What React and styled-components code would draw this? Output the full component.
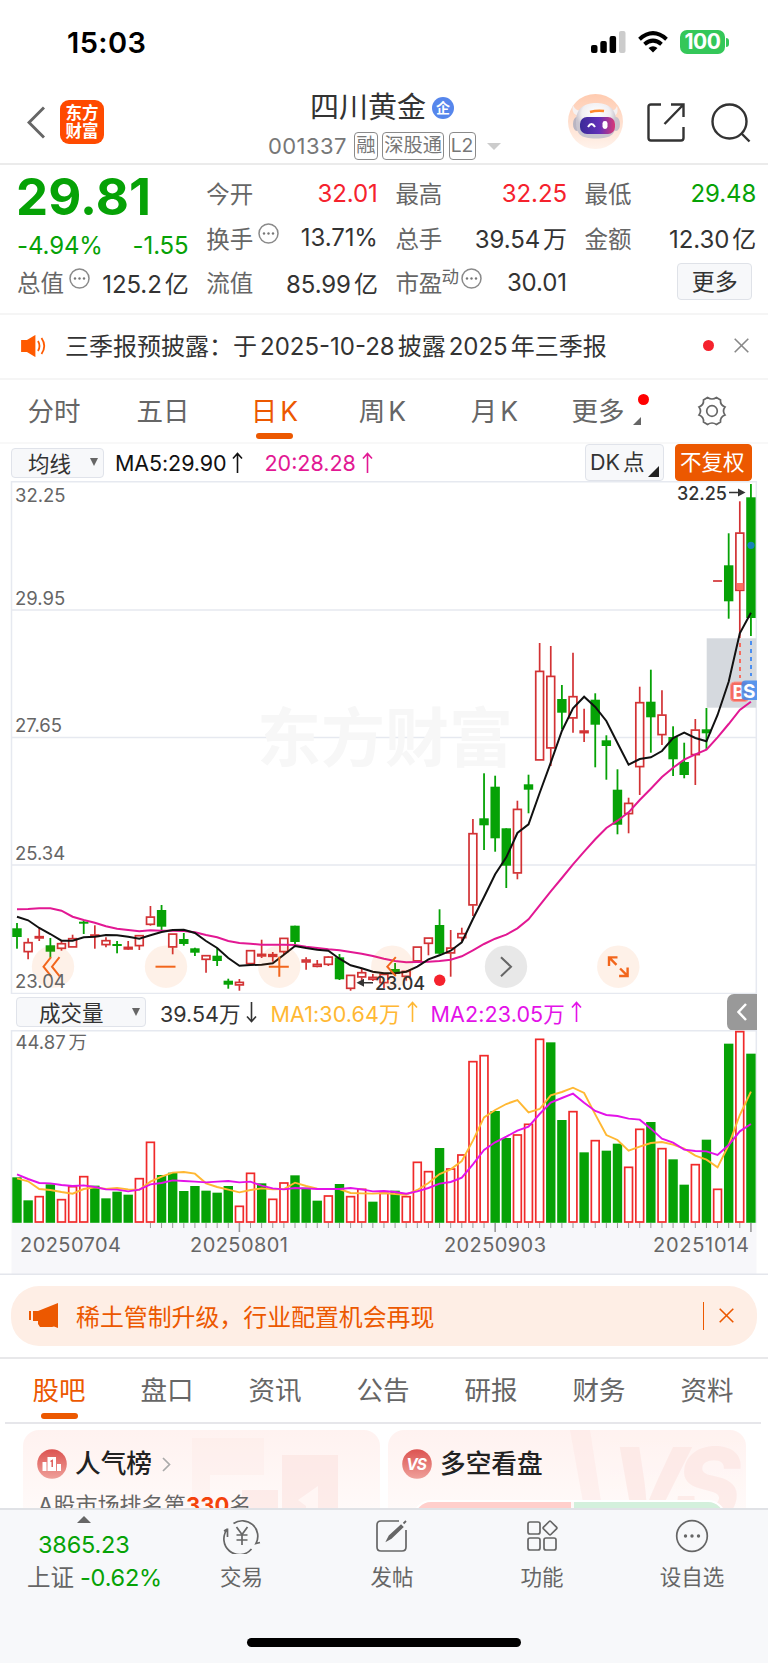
import React from 'react';
import styled, { createGlobalStyle } from 'styled-components';

const GlobalStyle = createGlobalStyle`
  * { box-sizing: border-box; }
  body {
    margin: 0;
    background: #fff;
    color: #333;
    font-family: Inter, "Noto Sans CJK SC", sans-serif;
    -webkit-font-smoothing: antialiased;
  }
  svg { display: block; flex: none; }
`;

const orange = '#ec5800';
const green = '#06a206';
const red = '#f5222d';

const Page = styled.div`
  width: 768px;
  height: 1663px;
  overflow: hidden;
  display: flex;
  flex-direction: column;
  white-space: nowrap;
`;

const StatusBar = styled.div`
  height: 84px;
  flex: none;
  display: flex;
  justify-content: space-between;
  align-items: center;
  padding: 0 39px 0 67px;
`;

const Clock = styled.div`
  font-size: 29px;
  font-weight: 600;
  letter-spacing: 0.4px;
  color: #000;
`;

const StatusIcons = styled.div`
  display: flex;
  align-items: center;
  gap: 12px;
`;

const Battery = styled.div`
  display: flex;
  align-items: center;
  gap: 1px;
  &::after {
    content: '';
    width: 3px;
    height: 9px;
    border-radius: 0 3px 3px 0;
    background: #34c759;
  }
`;

const BatteryLevel = styled.div`
  width: 45px;
  height: 24px;
  border-radius: 7px;
  background: #34c759;
  color: #fff;
  font-size: 21px;
  font-weight: 700;
  letter-spacing: -0.4px;
  line-height: 24px;
  text-align: center;
`;

const Header = styled.div`
  height: 81px;
  flex: none;
  display: grid;
  grid-template-columns: 241px 281px 1fr;
  padding: 0 17px 0 27px;
  border-bottom: 2px solid #ebebeb;
`;

const HeaderLeft = styled.div`
  display: flex;
  align-items: flex-start;
  gap: 15px;
  padding-top: 16px;
`;

const Logo = styled.div`
  width: 44px;
  height: 44px;
  border-radius: 9px;
  background: #ff4a00;
  color: #fff;
  font-size: 16.5px;
  font-weight: 700;
  line-height: 18px;
  padding-top: 4px;
  text-align: center;
`;

const HeaderTitle = styled.div`
  display: flex;
  flex-direction: column;
`;

const StockName = styled.div`
  display: flex;
  align-items: center;
  gap: 6px;
  padding: 6px 0 0 42px;
  height: 41px;
  font-size: 29px;
  line-height: 36px;
`;

const NameBadge = styled.span`
  width: 22px;
  height: 22px;
  border-radius: 50%;
  background: #5686ec;
  color: #fff;
  font-size: 14px;
  font-weight: 700;
  line-height: 21px;
  text-align: center;
`;

const StockCode = styled.div`
  display: flex;
  align-items: center;
  gap: 4.3px;
  height: 42px;
  color: #777;
  font-size: 22px;
  letter-spacing: 0.4px;
`;

const CodeNumber = styled.span`
  margin-right: 3px;
`;

const CodeTag = styled.span`
  height: 28px;
  padding: 0 1.2px;
  border: 1.5px solid #8a8a8a;
  border-radius: 4px;
  font-size: 19.3px;
  line-height: 25px;
  letter-spacing: 0;
`;

const HeaderActions = styled.div`
  display: flex;
  align-items: flex-start;
  justify-content: flex-end;
`;

const Stats = styled.div`
  height: 150px;
  flex: none;
  display: grid;
  grid-template-columns: repeat(4, 171.6px);
  column-gap: 17.6px;
  padding: 6px 0 0 17px;
  border-bottom: 2px solid #f5f5f5;
`;

const StatColumn = styled.div`
  display: flex;
  flex-direction: column;
`;

const Stat = styled.div`
  height: 44.5px;
  display: flex;
  align-items: center;
  justify-content: space-between;
  font-size: 24px;
  letter-spacing: -0.1px;
  color: ${(p) => p.$color || '#333'};
`;

const Unit = styled.span`
  margin-left: 3px;
`;

const StatLabel = styled.span`
  display: flex;
  align-items: center;
  gap: 5px;
  color: #666;
  font-size: 23.5px;
  letter-spacing: 0;
  svg { margin-bottom: 8px; }
`;

const Sup = styled.span`
  font-size: 17.5px;
  margin: 0 -3px 14px -6px;
`;

const LastPrice = styled.div`
  height: 52px;
  margin-left: -1px;
  font-size: 51px;
  font-weight: 700;
  line-height: 52px;
  letter-spacing: 0.1px;
  color: ${green};
`;

const PriceChange = styled(Stat)`
  height: 37px;
  padding-top: 19px;
  padding-bottom: 12px;
`;

const MoreButton = styled.div`
  width: 75px;
  height: 37px;
  margin: 3px 4px 0 auto;
  border: 1.5px solid #dfe2e8;
  border-radius: 4px;
  background: #f7f8fa;
  font-size: 23px;
  line-height: 36px;
  text-align: center;
`;

const Notice = styled.div`
  height: 65px;
  flex: none;
  display: flex;
  align-items: center;
  padding: 0 19px 2px 21px;
  border-bottom: 2px solid #f5f5f5;
  font-size: 24px;
`;

const NoticeText = styled.span`
  flex: 1;
  margin-left: ${(p) => p.$gap};
  margin-top: ${(p) => p.$lift || '0'};
`;

const Digits = styled.span`
  margin: 0 3px;
`;

const Dot = styled.i`
  width: 11px;
  height: 11px;
  border-radius: 50%;
  background: ${red};
  margin-right: 20px;
`;

const PeriodTabs = styled.div`
  height: 64px;
  flex: none;
  display: grid;
  grid-template-columns: 108px 110px 113px 103px 121px 86px 1fr;
  border-bottom: 2px solid #f8f8f8;
`;

const Tab = styled.div`
  position: relative;
  display: flex;
  justify-content: center;
  padding-top: 12px;
  font-size: 26.5px;
  line-height: 38px;
  color: ${(p) => (p.$active ? orange : '#666')};
  &::after {
    content: '';
    position: absolute;
    bottom: 3px;
    width: 37px;
    height: 6px;
    border-radius: 3px;
    background: ${(p) => (p.$active ? orange : 'transparent')};
  }
`;

const K = styled.span`
  margin-left: 3px;
`;

const TabDot = styled.i`
  position: absolute;
  top: 14px;
  right: -8px;
  width: 11px;
  height: 11px;
  border-radius: 50%;
  background: #f00;
`;

const TabCorner = styled.i`
  position: absolute;
  top: 37px;
  right: 0;
  border-left: 8px solid transparent;
  border-bottom: 8px solid #666;
`;

const Bar = styled.div`
  height: ${(p) => p.$height};
  flex: none;
  display: flex;
  align-items: center;
  padding: 0 ${(p) => p.$right} 0 ${(p) => p.$left};
  font-size: 21.5px;
`;

const Picker = styled.div`
  width: ${(p) => p.$width};
  height: 30px;
  display: flex;
  align-items: center;
  justify-content: space-between;
  padding: 0 5px 1px ${(p) => p.$indent};
  border: 1.5px solid #e0e3ea;
  border-radius: 4px;
  background: #f7f8fa;
  font-size: 21.5px;
  &::after {
    content: '';
    border: 4px solid transparent;
    border-top: 8px solid #666;
    border-bottom: 0;
  }
`;

const Legend = styled.span`
  display: flex;
  align-items: center;
  gap: 5px;
  margin-left: ${(p) => p.$gap};
  letter-spacing: ${(p) => p.$spacing || '0'};
  color: ${(p) => p.$color};
`;

const ModeButton = styled.div`
  width: ${(p) => p.$width};
  position: relative;
  height: 37px;
  padding-left: 4px;
  margin-left: ${(p) => p.$gap};
  border: 1.5px solid ${(p) => (p.$filled ? orange : '#e0e3ea')};
  border-radius: 4px;
  background: ${(p) => (p.$filled ? orange : '#f7f8fa')};
  color: ${(p) => (p.$filled ? '#fff' : '#333')};
  line-height: 35px;
  word-spacing: -3px;
  &::after {
    content: '';
    display: ${(p) => (p.$filled ? 'none' : 'block')};
    position: absolute;
    right: 4px;
    bottom: 3px;
    border-left: 11px solid transparent;
    border-bottom: 11px solid #222;
  }
`;

const PanelToggle = styled.div`
  display: flex;
  align-items: center;
  justify-content: center;
  width: 30px;
  height: 37px;
  margin-left: auto;
  border-radius: 7px 0 0 7px;
  background: #999;
`;

const Banner = styled.div`
  height: 60px;
  flex: none;
  display: flex;
  align-items: center;
  margin: 11px 11px;
  padding: 0 23px 1px 18px;
  border-radius: 28px;
  background: #feeee5;
  color: ${orange};
  font-size: 23.9px;
`;

const Divider = styled.i`
  width: 1.5px;
  height: 28px;
  margin-right: 15px;
  background: ${orange};
`;

const SectionTabs = styled.div`
  height: 65px;
  flex: none;
  display: grid;
  grid-template-columns: repeat(7, 108px);
  margin: 0 7px 0 5px;
  border-bottom: 2px solid #e6e6ea;
`;

const SectionEdge = styled.div`
  height: 2px;
  flex: none;
  background: #e8e8ea;
`;

const Cards = styled.div`
  height: 84px;
  flex: none;
  overflow: hidden;
  display: grid;
  grid-template-columns: 357px 358px;
  gap: 8px;
  padding: 6px 0 0 23px;
`;

const Card = styled.div`
  position: relative;
  overflow: hidden;
  height: 150px;
  border-radius: 16px;
  background: linear-gradient(#fff2f0, #fffaf9 80px);
`;

const CardArt = styled.svg`
  position: absolute;
  top: 0;
  right: 0;
`;

const CardTitle = styled.div`
  position: relative;
  display: flex;
  align-items: center;
  gap: 8px;
  height: 68px;
  padding-left: 14px;
  line-height: 32px;
  color: #222;
  font-size: 25.7px;
  font-weight: 500;
`;

const TitleText = styled.span`
  margin-bottom: 1px;
`;

const CardText = styled.div`
  position: relative;
  margin-top: -7px;
  padding-left: 15px;
  font-size: 22px;
  line-height: 28px;
  letter-spacing: 0.1px;
  color: #666;
  b { color: #f4420a; }
`;

const Vote = styled.div`
  position: relative;
  display: flex;
  gap: 3px;
  width: 313px;
  height: 40px;
  margin: 2px 0 0 25px;
  border: 2px solid #fff;
  border-radius: 18px;
  overflow: hidden;
`;

const VoteSide = styled.div`
  flex: ${(p) => p.$share};
  background: ${(p) => p.$color};
`;

const Dock = styled.div`
  height: 155px;
  flex: none;
  display: flex;
  flex-direction: column;
  align-items: center;
  border-top: 2px solid #e0e2e6;
  background: #f7f8fa;
`;

const DockItems = styled.div`
  width: 768px;
  height: 128px;
  display: grid;
  grid-template-columns: 166px 151px 150px 150px 150px;
`;

const DockItem = styled.div`
  display: flex;
  flex-direction: column;
  align-items: center;
  gap: 5px;
  padding-top: 8px;
  color: #666;
  font-size: 21.5px;
  line-height: 36px;
`;

const IndexQuote = styled.div`
  padding: 6px 0 0 27px;
  color: ${green};
  font-size: 23.5px;
  line-height: 33px;
  letter-spacing: -0.2px;
  svg { margin-left: 50px; }
`;

const IndexValue = styled.div`
  padding-left: 11px;
  margin-top: 5px;
`;

const IndexName = styled.span`
  color: #666;
  letter-spacing: 0;
  margin-right: 6px;
`;

const HomeBar = styled.div`
  width: 274px;
  height: 9px;
  border-radius: 5px;
  background: #000;
`;

// [colour, body top, body bottom, high, low], one row for each trading day
const candles = [
  ['g', 928.3, 937, 923, 948.7], ['r', 942.3, 952, 938.3, 959.3], ['r', 936.3, 938.3, 928, 941],
  ['g', 945.3, 951.7, 938, 957.7], ['r', 943.3, 948.7, 941, 950.7], ['r', 938.3, 947.3, 934.7, 947.3],
  ['g', 921.7, 923.3, 920, 934], ['r', 934.7, 936.7, 925.3, 948.7], ['r', 940.3, 945, 937.3, 947.3],
  ['g', 944, 946, 941, 953.3], ['r', 947, 949.3, 941, 950], ['r', 935.3, 946, 935.3, 950],
  ['r', 916.7, 924.7, 906, 925.7], ['g', 910, 926.7, 905, 930], ['r', 933.7, 947.3, 933.7, 954.3],
  ['g', 939, 944, 933, 945.7], ['g', 948.3, 952.7, 947.7, 956], ['r', 955.3, 959.7, 955.3, 972.7],
  ['g', 955.7, 961, 948, 966], ['g', 980.7, 984.7, 978.7, 988.7], ['r', 982, 985.3, 979, 990.7],
  ['r', 950.3, 964, 950, 964], ['r', 954, 956.3, 939.7, 958], ['r', 954.3, 956.7, 952, 961.7],
  ['r', 938, 952, 938, 954], ['g', 925.7, 942, 925.7, 945.7], ['r', 959.7, 962.3, 957.3, 969.7],
  ['r', 964, 966.7, 960, 967.3], ['r', 956.7, 964.7, 956, 966], ['g', 957.3, 979.3, 954, 980],
  ['r', 975, 988.7, 975, 990.7], ['r', 972.3, 977.3, 968.7, 980.7], ['r', 977, 979.7, 974, 981],
  ['r', 974, 983, 973, 988], ['g', 969, 974, 963, 975.7], ['r', 971, 976.7, 971, 980.7],
  ['r', 946.7, 961.3, 946.7, 961.3], ['r', 937.7, 943.7, 937.7, 955.3], ['g', 925, 953.7, 909.3, 954.7],
  ['r', 947.7, 953.3, 930, 976.7], ['r', 933.3, 938, 927.7, 941], ['r', 833.3, 905.3, 819, 916],
  ['g', 818.3, 825.3, 773.3, 850], ['g', 786.7, 838.3, 775.7, 851.7], ['g', 828.3, 865.7, 828.3, 888],
  ['r', 809, 873.3, 800.7, 879.3], ['g', 784.3, 789.7, 774.7, 813.3], ['r', 671, 760.3, 643, 760.3],
  ['r', 676, 748.3, 646, 766], ['g', 699, 712.7, 685, 729.3], ['r', 696.3, 718.3, 652.7, 732.7],
  ['r', 730.7, 733, 708.7, 742], ['g', 699.7, 724.7, 693.3, 767.3], ['g', 740.3, 746, 735.3, 779.7],
  ['g', 789.7, 824.7, 769.3, 834.3], ['r', 803, 814, 797.7, 833.3], ['r', 702.3, 767, 686.7, 795],
  ['g', 701.7, 717.3, 669.7, 752.7], ['r', 714.7, 735, 690.3, 745], ['g', 737, 759.3, 726.3, 776],
  ['g', 762, 775, 742.7, 778.3], ['r', 729.7, 755, 719, 785], ['g', 729.3, 733.3, 708, 749.3],
  ['r', 581, 582, 581, 582], ['g', 565.3, 601.3, 533.3, 618.7], ['r', 532.7, 590.7, 501.3, 638],
  ['g', 497.3, 618, 484, 636],
];

const ma5 = [
  916.7, 920.3, 928, 934, 940.7, 940.7, 937.3, 936.7, 935, 935.3, 936.7, 938.7, 935.3, 932, 930, 929.7, 933,
  941, 948, 958, 965.7, 965, 964.7, 963.3, 954.7, 946, 948, 949.7, 950.7, 958.7, 965.3, 968.3, 971.7, 973.3,
  973.3, 971.7, 966.7, 959.3, 955.3, 950.7, 942.3, 919, 897, 874.3, 857.3, 833, 824.3, 793, 762.7, 731, 708.3,
  696.7, 707, 721, 743, 764.7, 759, 757.3, 751, 738, 732.7, 738, 741.3, 715, 681.7, 633.3, 612.7,
];

const ma20 = [
  909.3, 909, 908.3, 908.3, 910.7, 916.7, 920, 922.7, 926.3, 928.7, 930, 931.3, 930.3, 930.7, 930.7, 931, 932.3,
  935, 937.3, 941, 943, 943.7, 944.7, 944.7, 944.7, 945, 946.7, 948, 949.3, 950.3, 952, 953.7, 956, 958.7, 961,
  962.3, 962, 961.7, 961, 959.7, 956.3, 950.3, 944, 938.7, 934.7, 928.3, 919.3, 905.3, 891.3, 878, 864.3, 851.7,
  839.3, 828, 820.7, 812.3, 800, 788.7, 777, 767.7, 759.7, 754.3, 749.7, 737.3, 724, 710, 701.7,
];

// volumes and their averages are in thirds of a pixel below the panel's top
const volumes = [
  472, 541, 530, 493, 539, 500, 470, 497, 535, 515, 524, 476, 367, 465, 458, 513, 498, 512, 518, 498, 559, 460,
  490, 538, 489, 466, 503, 542, 528, 492, 530, 508, 545, 520, 512, 530, 427, 455, 384, 447, 405, 125, 107, 273,
  354, 345, 313, 58, 67, 300, 275, 397, 362, 392, 371, 442, 328, 306, 386, 418, 494, 434, 359, 508, 71, 35, 101,
];

const volumeColors = 'ggrgrrrgggg' + 'rrggggggg' + 'rrgrrggg' + 'rgrrgrgr' + 'rrgrrrrg' + 'grrrggrgrggrrgrggrgrgrg';

const volMa1 = [
  475, 484, 507, 510, 516, 521, 507, 502, 507, 504, 508, 509, 485, 470, 458, 456, 461, 490, 501, 509, 517, 510,
  505, 508, 507, 488, 498, 506, 507, 507, 519, 520, 521, 519, 522, 524, 510, 489, 462, 448, 423, 362, 292, 270,
  252, 240, 277, 267, 226, 216, 203, 219, 283, 345, 360, 392, 380, 369, 366, 374, 386, 407, 419, 442, 375, 285, 215,
];

const volMa2 = [
  463, 477, 489, 490, 495, 498, 496, 501, 508, 509, 514, 509, 493, 489, 481, 483, 485, 487, 485, 483, 487, 485,
  497, 505, 508, 504, 505, 507, 507, 507, 504, 508, 514, 513, 516, 521, 514, 504, 491, 486, 473, 433, 390, 367,
  350, 332, 320, 282, 248, 234, 221, 248, 273, 285, 288, 296, 299, 326, 356, 368, 389, 393, 394, 405, 375, 334, 312,
];

const xAt = (i) => 17 + i * 11.12;
const toLine = (values, y = (v) => v) => values.map((v, i) => `${xAt(i)},${y(v)}`).join(' ');
const volY = (v) => 1020 + v / 3;

const Candle = ({ i, data }) => {
  const [c, top, bottom, high, low] = data;
  const x = xAt(i);
  const h = bottom - top;
  if (c === 'g') {
    return (
      <g fill="#06a206">
        <rect x={x - 0.9} y={high} width="1.8" height={low - high} />
        <rect x={x - 4.7} y={top} width="9.4" height={Math.max(h, 2)} />
      </g>
    );
  }
  return (
    <g fill="none" stroke="#d23234" strokeWidth="1.7">
      {high < top && <path d={`M${x} ${high}V${top}`} />}
      {low > bottom && <path d={`M${x} ${bottom}V${low}`} />}
      {h < 1.5 ? <path d={`M${x - 4.5} ${top}h9`} /> : <rect x={x - 3.9} y={top + 0.4} width="7.8" height={h - 0.8} />}
    </g>
  );
};

const ChartButton = ({ x, gray, children }) => (
  <g transform={`translate(${x} 966.7)`} fill="none" stroke={gray ? '#666' : '#f2661c'} strokeWidth="2">
    <circle r="21.2" fill={gray ? '#000' : '#f06000'} fillOpacity=".09" stroke="none" />
    {children}
  </g>
);

const PriceChart = () => (
  <svg width="768" height="513" viewBox="0 481 768 513" fontFamily="Inter, sans-serif" fontSize="18.5">
    <g fill="none" stroke="#e6e9f0" strokeWidth="1.5">
      <path d="M11.5 481.8H756.3V993.5H11.5Z" />
      <path d="M12 610H756M12 737.4H756M12 865H756" />
    </g>
    <text x="257" y="761" fontSize="64" fontWeight="700" fontFamily="'Noto Sans CJK SC'" fill="#f7f7f7">东方财富</text>
    <rect x="706.7" y="638.3" width="49.5" height="69.4" fill="#d5d9de" />
    {candles.map((c, i) => <Candle key={i} i={i} data={c} />)}
    <path d="M740 643V678" stroke="#f76c5e" strokeWidth="2" strokeDasharray="4 4" />
    <path d="M751 641V676" stroke="#4b8ef0" strokeWidth="2" strokeDasharray="4 4" />
    <rect x="737" y="583" width="6.5" height="7" fill="#ff7063" />
    <circle cx="751" cy="545.3" r="3.6" fill="#1683b8" />
    <polyline points={toLine(ma20)} fill="none" stroke="#e21893" strokeWidth="2" />
    <polyline points={toLine(ma5)} fill="none" stroke="#111" strokeWidth="2" />
    <g fontWeight="700" fontSize="19" fill="#fff">
      <rect x="730.5" y="682" width="18" height="19.500" rx="4" fill="#f46c60" stroke="#f99a92" />
      <text x="732.5" y="698.5">B</text>
      <rect x="741.5" y="680.5" width="20" height="19.500" rx="4" fill="#4388ed" fillOpacity=".85" />
      <text x="743" y="697.5">S</text>
    </g>
    <rect x="757" y="640" width="11" height="70" fill="#fff" />
    <ChartButton x={53}><path d="M-2-9.5-9.5 0-2 9.5M6.5-9.5-1 0 6.5 9.5" /></ChartButton>
    <ChartButton x={166}><path d="M-10.5 0H9.5" /></ChartButton>
    <ChartButton x={279.3}><path d="M-10.5 0H9.5M0-10V10" /></ChartButton>
    <ChartButton x={392.3}><path d="M3.5-9.5-5 0 3.5 9.5" /></ChartButton>
    <ChartButton x={506} gray><path d="M-5-9.5 5 0-5 9.5" /></ChartButton>
    <ChartButton x={618.3}><path d="M-9.3-.8V-9.3H-.8M-9-9-1.8-1.8M9.3.8V9.3H.8M9 9 1.8 1.8" strokeWidth="2.4" /></ChartButton>
    <g fill="#666">
      <text x="15" y="501.5">32.25</text>
      <text x="15" y="604.5">29.95</text>
      <text x="15" y="732">27.65</text>
      <text x="15" y="859.5">25.34</text>
      <text x="15" y="988">23.04</text>
    </g>
    <g fill="#333" fontWeight="500" fontSize="18">
      <text x="677" y="499.500" textLength="50">32.25</text>
      <text x="375" y="989.5" textLength="50">23.04</text>
      <path d="M729 491.8H738V488.5L745.5 492.5 738 496.5V493.2H729Z" />
      <path d="M373 982H364V978.7L356.5 982.7 364 986.7V983.4H373Z" />
    </g>
    <circle cx="439.7" cy="980.3" r="5.7" fill="#f5222d" />
  </svg>
);

const VolumeChart = () => (
  <svg width="768" height="245" viewBox="0 1030 768 245" fontFamily="Inter, 'Noto Sans CJK SC', sans-serif">
    <rect x="11.5" y="1222.5" width="745" height="52" fill="#f7f7fa" />
    <path d="M11.5 1223V1030.8H756.3V1223" fill="none" stroke="#e6e9f0" strokeWidth="1.5" />
    {volumes.map((v, i) => (volumeColors[i] === 'g'
      ? <rect key={i} x={xAt(i) - 4.7} y={volY(v)} width="9.4" height={1222.8 - volY(v)} fill="#06a206" />
      : <rect key={i} x={xAt(i) - 3.9} y={volY(v)} width="7.8" height={1222 - volY(v)} fill="#fff" stroke="#f02a2a" strokeWidth="1.7" />
    ))}
    {volumes.map((v, i) => (i > 11 && (
      <path key={i} d={`M${xAt(i)} 1223V${[20, 43, 66].includes(i) ? 1232 : 1228}`} stroke="#999" strokeWidth={[20, 43, 66].includes(i) ? 1.6 : 1} />
    )))}
    <polyline points={toLine(volMa1, volY)} fill="none" stroke="#ffb833" strokeWidth="1.9" />
    <polyline points={toLine(volMa2, volY)} fill="none" stroke="#e312e8" strokeWidth="1.9" />
    <g fill="#666">
      <text x="15.5" y="1049" fontSize="18.5">44.87<tspan dx="3">万</tspan></text>
      <text x="20" y="1252" fontSize="20" textLength="101">20250704</text>
      <text x="190" y="1252" fontSize="20" textLength="98">20250801</text>
      <text x="444" y="1252" fontSize="20" textLength="102">20250903</text>
      <text x="653" y="1252" fontSize="20" textLength="96">20251014</text>
    </g>
    <path d="M0 1274.3H768" stroke="#e4e6ec" strokeWidth="1.5" />
  </svg>
);

const MoreInfo = () => (
  <svg width="21" height="21" viewBox="0 0 21 21">
    <circle cx="10.5" cy="10.5" r="9.5" fill="none" stroke="#8a8a8a" strokeWidth="1.5" />
    <g fill="#777"><circle cx="6" cy="10.5" r="1.2" /><circle cx="10.5" cy="10.5" r="1.2" /><circle cx="15" cy="10.5" r="1.2" /></g>
  </svg>
);

const Arrow = ({ down }) => (
  <svg width="13" height="22" viewBox="0 0 13 22" fill="none" stroke="currentColor" strokeWidth="1.6">
    <path d={down ? 'M6.5 1V20M2 15.5 6.5 20.5 11 15.5' : 'M6.5 21V2M2 6.5 6.5 1.5 11 6.5'} />
  </svg>
);

const Cross = ({ size = 15, color }) => (
  <svg width={size} height={size} viewBox="0 0 15 15" stroke={color} strokeWidth="1.6"><path d="M.7.7 14.3 14.3M14.3.7.7 14.3" /></svg>
);

const Robot = () => (
  <svg width="55" height="55" viewBox="0 0 55 55" style={{ marginTop: 10, marginRight: 24 }}>
    <defs>
      <linearGradient id="halo" x2="0" y2="1"><stop stopColor="#ffcbb0" /><stop offset="1" stopColor="#fff3ec" /></linearGradient>
      <linearGradient id="visor"><stop stopColor="#3a2a98" /><stop offset=".55" stopColor="#6230b8" /><stop offset="1" stopColor="#d83a78" /></linearGradient>
      <radialGradient id="shell" cy=".3"><stop stopColor="#fff" /><stop offset=".7" stopColor="#f1eff2" /><stop offset="1" stopColor="#c9c5cf" /></radialGradient>
    </defs>
    <circle cx="27.5" cy="27.5" r="27.5" fill="url(#halo)" />
    <path d="M5 11C3 18 7 22 12 22L14 17C9 17 6 14 5 11ZM49 12C51 19 48 23 43 22L41 17C46 17 48 15 49 12Z" fill="#f5f1f2" />
    <ellipse cx="9" cy="30" rx="4" ry="7" fill="#b9b5c2" /><ellipse cx="48" cy="30" rx="4" ry="7" fill="#c8c3cc" />
    <path d="M8 27C8 14 17 9 28 9S48 14 48 27 44 44.5 28 44.5 8 40 8 27Z" fill="url(#shell)" />
    <path d="M22 18Q29 16 36 17" stroke="#ff8a2c" strokeWidth="2.5" fill="none" />
    <rect x="12" y="23" width="35" height="17" rx="7" fill="url(#visor)" />
    <path d="M20 33Q23.5 27 27 33" fill="none" stroke="#fff" strokeWidth="2" />
    <rect x="34.5" y="27" width="5" height="8" rx="2.4" fill="#fff" />
  </svg>
);

const sections = ['盘口', '资讯', '公告', '研报', '财务', '资料'];

const App = () => (
  <Page>
    <GlobalStyle />
    <StatusBar>
      <Clock>15:03</Clock>
      <StatusIcons>
        <svg width="35" height="22" viewBox="0 0 35 22">
          <rect y="14" width="6.5" height="8" rx="2" /><rect x="9.3" y="10" width="6.5" height="12" rx="2" />
          <rect x="18.6" y="5" width="6.5" height="17" rx="2" /><rect x="28" width="6.5" height="22" rx="2" fill="#ccc" />
        </svg>
        <svg width="30" height="22" viewBox="0 0 30 22" fill="none" stroke="#000" strokeWidth="4">
          <path d="M1.5 8.2Q15-3.8 28.5 8.2M6.5 13.2Q15 6 23.5 13.2" />
          <path d="M15 21.5 10.5 17Q15 13.5 19.5 17Z" fill="#000" stroke="none" />
        </svg>
        <Battery><BatteryLevel>100</BatteryLevel></Battery>
      </StatusIcons>
    </StatusBar>

    <Header>
      <HeaderLeft>
        <svg width="18" height="44" viewBox="0 0 18 44" fill="none" stroke="#666" strokeWidth="3"><path d="M17 7.5 2 22.5 17 37.5" /></svg>
        <Logo>东方<br />财富</Logo>
      </HeaderLeft>
      <HeaderTitle>
        <StockName>四川黄金<NameBadge>企</NameBadge></StockName>
        <StockCode>
          <CodeNumber>001337</CodeNumber>
          <CodeTag>融</CodeTag><CodeTag>深股通</CodeTag><CodeTag>L2</CodeTag>
          <svg width="14" height="7" viewBox="0 0 14 7" style={{ marginLeft: 7 }}><path d="M0 0H14L7 7Z" fill="#ccc" /></svg>
        </StockCode>
      </HeaderTitle>
      <HeaderActions>
        <Robot />
        <svg width="38" height="40" viewBox="0 0 38 40" fill="none" stroke="#333" strokeWidth="2.4" style={{ marginTop: 19, marginRight: 26 }}>
          <path d="M14 1.5H4Q1.5 1.5 1.5 4V35Q1.5 37.5 4 37.5H34Q36.5 37.5 36.5 35V24M24 1.5H36.5V14M36 2 17.5 21" />
        </svg>
        <svg width="40" height="40" viewBox="0 0 40 40" fill="none" stroke="#333" strokeWidth="2.4" style={{ marginTop: 19 }}>
          <circle cx="18.5" cy="18.5" r="17" /><path d="M30 30 38.5 38.5" />
        </svg>
      </HeaderActions>
    </Header>

    <Stats>
      <StatColumn>
        <LastPrice>29.81</LastPrice>
        <PriceChange $color={green}><span>-4.94%</span><span>-1.55</span></PriceChange>
        <Stat><StatLabel>总值<MoreInfo /></StatLabel><span>125.2<Unit>亿</Unit></span></Stat>
      </StatColumn>
      <StatColumn>
        <Stat $color={red}><StatLabel>今开</StatLabel>32.01</Stat>
        <Stat><StatLabel>换手<MoreInfo /></StatLabel>13.71%</Stat>
        <Stat><StatLabel>流值</StatLabel><span>85.99<Unit>亿</Unit></span></Stat>
      </StatColumn>
      <StatColumn>
        <Stat $color={red}><StatLabel>最高</StatLabel>32.25</Stat>
        <Stat><StatLabel>总手</StatLabel><span>39.54<Unit>万</Unit></span></Stat>
        <Stat><StatLabel>市盈<Sup>动</Sup><MoreInfo /></StatLabel>30.01</Stat>
      </StatColumn>
      <StatColumn>
        <Stat $color={green}><StatLabel>最低</StatLabel>29.48</Stat>
        <Stat><StatLabel>金额</StatLabel><span>12.30<Unit>亿</Unit></span></Stat>
        <MoreButton>更多</MoreButton>
      </StatColumn>
    </Stats>

    <Notice>
      <svg width="26" height="22" viewBox="0 0 26 22" fill="none" stroke="#ff5a00" strokeWidth="1.8">
        <path d="M1 6H6L13.5 1.5V20.5L6 16H1Z" fill="#ff5a00" /><path d="M17 6Q20 11 17 16M20.5 3Q26 11 20.5 19" />
      </svg>
      <NoticeText $gap="18px" $lift="-2px">三季报预披露：于<Digits>2025-10-28</Digits>披露<Digits>2025</Digits>年三季报</NoticeText>
      <Dot />
      <Cross color="#888" />
    </Notice>

    <PeriodTabs>
      <Tab>分时</Tab>
      <Tab>五日</Tab>
      <Tab $active>日<K>K</K></Tab>
      <Tab>周<K>K</K></Tab>
      <Tab>月<K>K</K></Tab>
      <Tab>更多<TabDot /><TabCorner /></Tab>
      <Tab>
        <svg width="30" height="30" viewBox="0 0 30 30" fill="none" stroke="#666" strokeWidth="1.7" style={{ margin: '4px 0 0 15px' }}>
          <path d="M10.5 1.5Q15 4.5 19.5 1.5L23.5 4Q23 9 28 11Q25 15 28 19Q23 21 23.5 26L19.5 28.5Q15 25.5 10.5 28.5L6.5 26Q7 21 2 19Q5 15 2 11Q7 9 6.5 4Z" />
          <circle cx="15" cy="15" r="5.3" />
        </svg>
      </Tab>
    </PeriodTabs>

    <Bar $height="37px" $left="11px" $right="16px">
      <Picker $width="93px" $indent="16px">均线</Picker>
      <Legend $gap="11px" $color="#111" $spacing="-0.1px">MA5:29.90<Arrow /></Legend>
      <Legend $gap="20px" $color="#e21893">20:28.28<Arrow /></Legend>
      <ModeButton $width="79px" $gap="auto">DK 点</ModeButton>
      <ModeButton $width="77px" $gap="11px" $filled>不复权</ModeButton>
    </Bar>
    <PriceChart />
    <Bar $height="36px" $left="16px" $right="11px">
      <Picker $width="130px" $indent="22px">成交量</Picker>
      <Legend $gap="14px" $color="#333">39.54万<Arrow down /></Legend>
      <Legend $gap="12px" $color="#ffb833" $spacing="0.1px">MA1:30.64万<Arrow /></Legend>
      <Legend $gap="12px" $color="#e312e8" $spacing="0.1px">MA2:23.05万<Arrow /></Legend>
      <PanelToggle>
        <svg width="10" height="18" viewBox="0 0 10 18" fill="none" stroke="#fff" strokeWidth="2.5"><path d="M9 1 1.5 9 9 17" /></svg>
      </PanelToggle>
    </Bar>
    <VolumeChart />

    <Banner>
      <svg width="29" height="25" viewBox="0 0 29 25" fill={orange}>
        <path d="M0 8H2V17H0ZM4 8H9L29 0V25L25 23.5 23 24H11L9 21V18H4Z" />
      </svg>
      <NoticeText $gap="18px">稀土管制升级，行业配置机会再现</NoticeText>
      <Divider />
      <Cross color={orange} />
    </Banner>

    <SectionEdge />
    <SectionTabs>
      <Tab $active>股吧</Tab>
      {sections.map((t) => <Tab key={t}>{t}</Tab>)}
    </SectionTabs>

    <Cards>
      <Card>
        <CardArt width="200" height="120" viewBox="0 0 200 120" fill="#fce3e0">
          <path d="M12 8H84V45H30V120H12Z" opacity=".25" /><path d="M102 25H158V120H102ZM62 60H98V120H62Z" opacity=".6" /><path d="M118 70 138 56V120H126V76Z" fill="#fff6f4" />
        </CardArt>
        <CardTitle>
          <svg width="30" height="30" viewBox="0 0 30 30">
            <defs><linearGradient id="badge" x2="0" y2="1"><stop stopColor="#dc5350" /><stop offset="1" stopColor="#efa09a" /></linearGradient></defs>
            <circle cx="15" cy="15" r="14.8" fill="url(#badge)" />
            <path d="M5.5 13H9.5V22H5.5ZM10.5 8H19V22H10.5ZM20 15H24V22H20Z" fill="#fff" />
            <path d="M13.5 12.5 15.2 11.5V18" fill="none" stroke="#dc5350" strokeWidth="1.4" />
          </svg>
          <TitleText>人气榜</TitleText>
          <svg width="9" height="15" viewBox="0 0 9 15" fill="none" stroke="#aaa" strokeWidth="1.7" style={{ marginLeft: 2 }}><path d="M1 1 7.5 7.5 1 14" /></svg>
        </CardTitle>
        <CardText>A股市场排名第<b>330</b>名</CardText>
      </Card>
      <Card>
        <CardArt width="220" height="120" viewBox="0 0 220 120" fill="#fce3e0">
          <path d="M44 0H64L76 78H58Z" opacity=".4" />
          <text x="84" y="90" fontSize="100" fontWeight="800" fontStyle="italic" letterSpacing="-12" opacity=".6">VS</text>
        </CardArt>
        <CardTitle>
          <svg width="30" height="30" viewBox="0 0 30 30">
            <circle cx="15" cy="15" r="14.8" fill="url(#badge)" />
            <text x="14" y="20.5" fontSize="15.5" fontWeight="700" fontStyle="italic" letterSpacing="-1" textAnchor="middle" fill="#fff">VS</text>
          </svg>
          <TitleText>多空看盘</TitleText>
        </CardTitle>
        <Vote><VoteSide $share={1.04} $color="#ffcfcc" /><VoteSide $share={1} $color="#d3f0dc" /></Vote>
      </Card>
    </Cards>

    <Dock>
      <DockItems>
        <IndexQuote>
          <svg width="14" height="7" viewBox="0 0 14 7"><path d="M0 7H14L7 0Z" fill="#666" /></svg>
          <IndexValue>3865.23</IndexValue>
          <div><IndexName>上证</IndexName>-0.62%</div>
        </IndexQuote>
        <DockItem>
          <svg width="38" height="36" viewBox="0 0 38 36" fill="none" stroke="#666" strokeWidth="1.7">
            <path d="M10.5 5.5A15.5 15.5 0 0 1 33 25.5L37 24.5M28.5 31A15.5 15.5 0 0 1 4.5 11L1 13M4.5 10.5V19" />
            <path d="M13.5 9 19 16.5 24.5 9M19 16.5V27M13.5 17H24.5M13.5 22H24.5" />
          </svg>
          交易
        </DockItem>
        <DockItem>
          <svg width="34" height="36" viewBox="0 0 34 36" fill="none" stroke="#666" strokeWidth="1.7">
            <path d="M24 3H6Q2 3 2 7V29Q2 33 6 33H27Q31 33 31 29V12" /><path d="M12.5 22 14.5 18 26 7.5 27.5 9 16 20ZM28.5 5.5 31 3" fill="#666" strokeWidth="1.8" />
          </svg>
          发帖
        </DockItem>
        <DockItem>
          <svg width="32" height="36" viewBox="0 0 32 36" fill="none" stroke="#666" strokeWidth="1.7">
            <rect x="2" y="4" width="12" height="12" rx="2" /><rect x="2" y="20" width="12" height="12" rx="2" /><rect x="18" y="20" width="12" height="12" rx="2" />
            <path d="M23.2 3.5Q24 2.7 24.8 3.5L30.5 9.2Q31.3 10 30.5 10.8L24.8 16.5Q24 17.3 23.2 16.5L17.5 10.8Q16.7 10 17.5 9.2Z" />
          </svg>
          功能
        </DockItem>
        <DockItem>
          <svg width="34" height="36" viewBox="0 0 34 36">
            <circle cx="17" cy="18" r="15.3" fill="none" stroke="#666" strokeWidth="1.7" />
            <g fill="#666"><circle cx="10.5" cy="18" r="1.7" /><circle cx="17" cy="18" r="1.7" /><circle cx="23.5" cy="18" r="1.7" /></g>
          </svg>
          设自选
        </DockItem>
      </DockItems>
      <HomeBar />
    </Dock>
  </Page>
);

export default App;
